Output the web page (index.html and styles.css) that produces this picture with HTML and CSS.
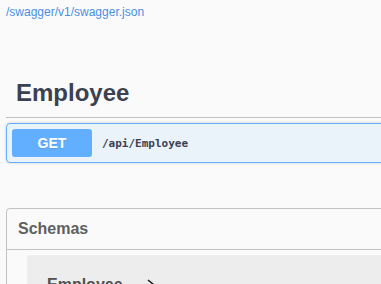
FILE: index.html
```html
<!DOCTYPE html>
<html lang="en">
<head>
    <meta charset="UTF-8">
    <meta name="viewport" content="width=device-width, initial-scale=1.0">
    <title>Swagger UI</title>
    <link rel="stylesheet" href="styles.css">
</head>
<body>

<div class="wrapper">
    <div class="info">
        <a class="spec-link" href="#">/swagger/v1/swagger.json</a>
    </div>

    <div class="tag-section">
        <h3 class="tag">Employee</h3>
        <div class="opblock opblock-get">
            <div class="opblock-summary">
                <span class="method">GET</span>
                <span class="path">/api/Employee</span>
            </div>
        </div>
    </div>

    <section class="models">
        <h4>Schemas</h4>
        <div class="model-container">
            <span class="model-title">Employee</span>
            <svg class="model-toggle" width="20" height="20" viewBox="0 0 20 20">
                <path d="M7 5l6 5-6 5" fill="none" stroke="#1b1b1b" stroke-width="1.6"/>
            </svg>
        </div>
    </section>
</div>

</body>
</html>
```

FILE: styles.css
```css
body {
    margin: 0;
    padding: 0;
    background-color: #fafafa;
    font-family: "Liberation Sans", Arial, sans-serif;
    overflow: hidden;
}
.wrapper {
    width: 700px;
    padding-left: 6px;
}
.info {
    padding-top: 4px;
    margin-bottom: 50px;
    line-height: 14px;
}
.spec-link {
    font-size: 12px;
    color: #4990e2;
    text-decoration: none;
}
.tag {
    margin: 0;
    padding: 10px 20px 10px 10px;
    font-size: 24px;
    line-height: 28px;
    font-weight: bold;
    color: #3b4151;
    border-bottom: 1px solid rgba(59, 65, 81, 0.3);
}
.opblock {
    margin: 5px 0 15px;
    border: 1px solid #61affe;
    border-radius: 4px;
    background: rgba(97, 175, 254, 0.1);
    box-shadow: 0 0 3px rgba(0, 0, 0, 0.19);
}
.opblock-summary {
    display: flex;
    align-items: center;
    padding: 5px;
}
.method {
    min-width: 80px;
    box-sizing: border-box;
    padding: 6px 15px;
    font-size: 14px;
    line-height: 16px;
    font-weight: bold;
    text-align: center;
    color: #fff;
    background: #61affe;
    border-radius: 3px;
    text-shadow: 0 1px 0 rgba(0, 0, 0, 0.1);
}
.path {
    padding: 0 10px;
    font-family: "DejaVu Sans Mono", monospace;
    font-size: 11px;
    font-weight: 600;
    color: #3b4151;
}
.models {
    margin-top: 45px;
    border: 1px solid rgba(59, 65, 81, 0.3);
    border-radius: 4px;
}
.models h4 {
    margin: 0;
    padding: 10px 20px 10px 11px;
    font-size: 16px;
    line-height: 20px;
    color: #606060;
    border-bottom: 1px solid rgba(59, 65, 81, 0.3);
}
.model-container {
    display: flex;
    align-items: center;
    margin: 5px 20px 15px;
    padding: 20px;
    background: rgba(0, 0, 0, 0.05);
    border-radius: 4px;
}
.model-title {
    font-size: 16px;
    font-weight: bold;
    color: #505050;
}
.model-toggle {
    margin-left: 18px;
}
```
